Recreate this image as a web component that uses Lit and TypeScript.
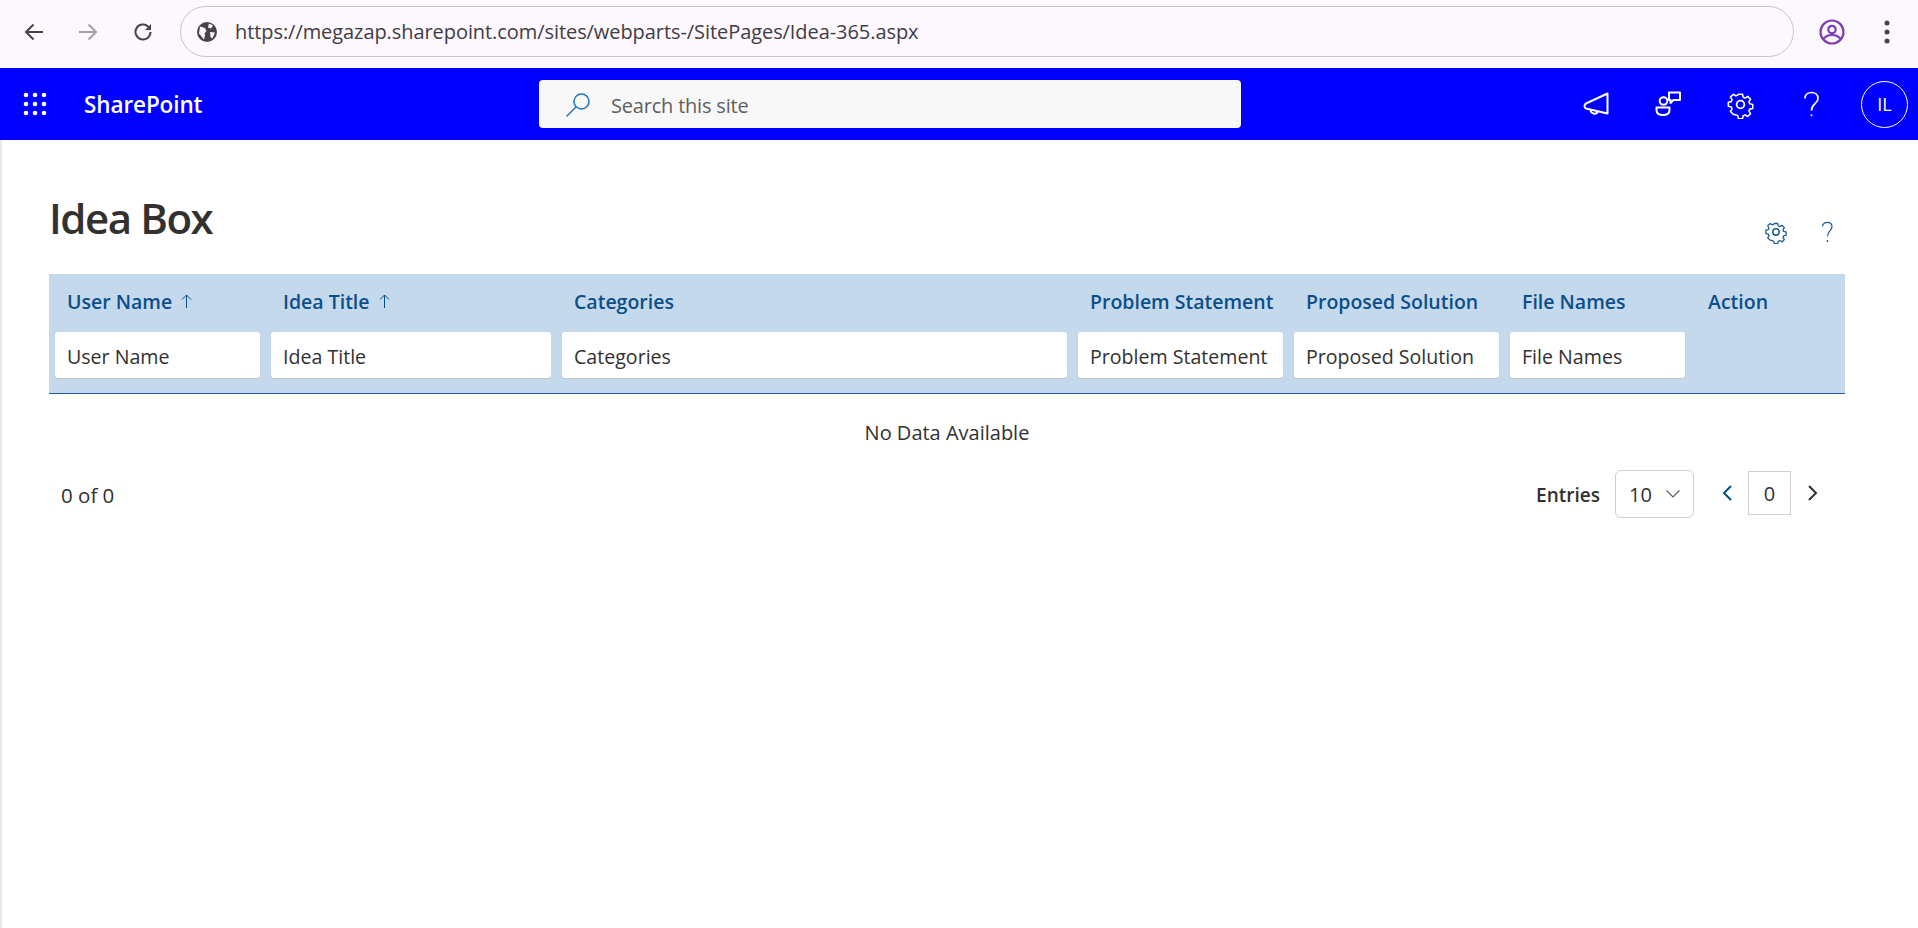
import { LitElement, html, svg, css } from 'lit';
import { customElement } from 'lit/decorators.js';

const columns = [
  { label: 'User Name', sort: true, filter: true },
  { label: 'Idea Title', sort: true, filter: true },
  { label: 'Categories', sort: false, filter: true },
  { label: 'Problem Statement', sort: false, filter: true },
  { label: 'Proposed Solution', sort: false, filter: true },
  { label: 'File Names', sort: false, filter: true },
  { label: 'Action', sort: false, filter: false },
];

const gear = html`<svg class="gear" viewBox="0 0 24 24" fill="none" stroke="currentColor" stroke-width="1.5" stroke-linejoin="round">
  <circle cx="12" cy="12" r="3.2"></circle>
  <path d="M10 2h4l.6 2.9 1.9.8 2.5-1.6 2.8 2.8-1.6 2.5.8 1.9 2.9.6v4l-2.9.6-.8 1.9 1.6 2.5-2.8 2.8-2.5-1.6-1.9.8-.6 2.9h-4l-.6-2.9-1.9-.8L5 21.6l-2.8-2.8 1.6-2.5-.8-1.9-2.9-.6v-4l2.9-.6.8-1.9L2.2 4.8 5 2l2.5 1.6 1.9-.8z" transform="translate(1.8 1.8) scale(.85)"></path>
</svg>`;

@customElement('app-root')
export class AppRoot extends LitElement {
  static styles = css`
    :host {
      display: block;
      height: 928px;
      overflow: hidden;
      background: #fff;
      font-family: 'Open Sans', 'Liberation Sans', sans-serif;
      color: #323130;
    }
    svg { display: block; }

    .browser {
      height: 67px;
      box-sizing: border-box;
      margin-bottom: 1px;
      background: #fdf7fe;
      display: flex;
      align-items: center;
      padding: 0 19px 4px 23px;
      color: #46434b;
    }
    .nav { width: 22px; height: 22px; margin-right: 32px; }
    .nav.off { color: #a3a0a6; margin-right: 33px; }
    .nav.reload { margin-right: 26px; }
    .address {
      width: 1614px;
      height: 51px;
      box-sizing: border-box;
      border: 1.5px solid #c9c2cb;
      border-radius: 26px;
      display: flex;
      align-items: center;
      padding-left: 15px;
      font-size: 20px;
      letter-spacing: -.07px;
      color: #3f3c44;
    }
    .address svg { width: 22px; height: 22px; margin-right: 17px; }
    .profile { width: 26px; height: 26px; margin-left: 25px; color: #7b3fb5; }
    .kebab { width: 6px; height: 24px; margin-left: 39px; color: #46434b; }

    .suite {
      height: 72px;
      background: #0000ff;
      color: #fff;
      display: flex;
      align-items: center;
    }
    .waffle { width: 24px; height: 24px; margin-left: 23px; }
    .brand {
      width: 455px;
      margin-left: 37px;
      font-size: 22.5px;
      font-weight: 600;
      letter-spacing: -.1px;
    }
    .search {
      width: 702px;
      height: 48px;
      box-sizing: border-box;
      background: #f8f8f8;
      border-radius: 4px;
      display: flex;
      align-items: center;
      padding: 2px 0 0 26px;
      color: #605e5c;
      font-size: 20px;
      letter-spacing: -.2px;
    }
    .search svg { width: 26px; height: 26px; margin-right: 20px; color: #1f75bd; }
    .actions { margin-left: auto; margin-right: 10px; display: flex; align-items: center; }
    .actions svg { width: 26px; height: 26px; }
    .actions svg.gear { width: 29px; height: 29px; }
    .actions .cell { width: 72px; display: flex; justify-content: center; }
    .avatar {
      width: 47px;
      height: 47px;
      box-sizing: border-box;
      border: 1px solid #fff;
      border-radius: 50%;
      display: flex;
      align-items: center;
      justify-content: center;
      font-size: 18px;
      margin-left: 13px;
    }

    .page {
      height: 788px;
      box-sizing: border-box;
      border-left: 2px solid #e8e8e8;
      padding: 0 73px 0 47px;
    }
    .title-row {
      height: 134px;
      display: flex;
      align-items: flex-start;
      justify-content: space-between;
    }
    h1 {
      margin: 0;
      padding-top: 51px;
      font-size: 42px;
      line-height: 54px;
      font-weight: 600;
      letter-spacing: -1.45px;
      color: #323130;
    }
    .tools { display: flex; align-items: center; margin-top: 80px; color: #1a5a96; }
    .tools svg { width: 24px; height: 24px; }
    .tools .help { margin-left: 27px; margin-right: 6px; }

    .grid {
      display: grid;
      grid-template-columns: 216px 291px 516px 216px 216px 186px 155px;
      background: #c5d9ec;
      border-bottom: 1px solid #1f5c99;
      height: 120px;
      box-sizing: border-box;
    }
    .col { padding: 0 5px 0 6px; display: flex; flex-direction: column; }
    .col-head {
      height: 58px;
      box-sizing: border-box;
      padding: 0 0 4px 12px;
      display: flex;
      align-items: center;
      gap: 9px;
      font-size: 19.5px;
      font-weight: 600;
      color: #0b4f8a;
      white-space: nowrap;
    }
    .col-head svg { width: 11px; height: 14px; }
    .filter {
      height: 46px;
      box-sizing: border-box;
      background: #fff;
      border-radius: 3px;
      box-shadow: 0 1px 1px #c4c4c4;
      padding: 2px 0 0 12px;
      display: flex;
      align-items: center;
      font-size: 19.6px;
      color: #323130;
      white-space: nowrap;
      overflow: hidden;
    }
    .empty {
      height: 76px;
      display: flex;
      align-items: center;
      justify-content: center;
      font-size: 20px;
    }
    .pager {
      display: flex;
      align-items: center;
      height: 48px;
      padding: 0 26px 0 12px;
      font-size: 20px;
    }
    .pager .count { margin: 2px auto 0 0; font-size: 20.5px; }
    .entries { font-weight: 600; font-size: 19px; margin: 2px 15px 0 0; }
    .select {
      width: 79px;
      height: 48px;
      box-sizing: border-box;
      border: 1px solid #cfcfcf;
      border-radius: 6px;
      display: flex;
      align-items: center;
      padding-left: 13px;
      gap: 13px;
    }
    .select svg { width: 16px; height: 10px; color: #605e5c; }
    .chev { width: 12px; height: 20px; margin-bottom: 2px; }
    .prev { margin-left: 27px; color: #004e8c; }
    .next { color: #323130; }
    .page-no {
      width: 43px;
      height: 44px;
      box-sizing: border-box;
      border: 1px solid #cfcfcf;
      margin: 0 16px 2px 15px;
      display: flex;
      align-items: center;
      justify-content: center;
    }
  `;

  renderBrowser() {
    return html`<div class="browser">
      <svg class="nav" viewBox="0 0 22 22" fill="none" stroke="currentColor" stroke-width="2"><path d="M20 11H3M10.5 3.5 3 11l7.5 7.5"></path></svg>
      <svg class="nav off" viewBox="0 0 22 22" fill="none" stroke="currentColor" stroke-width="2"><path d="M2 11h17M11.5 3.5 19 11l-7.5 7.5"></path></svg>
      <svg class="nav reload" viewBox="0 0 22 22" fill="none" stroke="currentColor" stroke-width="2"><path d="M18.5 11a7.5 7.5 0 1 1-2.3-5.4L18.5 8"></path><path d="M19 3v6h-6z" fill="currentColor" stroke="none"></path></svg>
      <div class="address">
        <svg viewBox="0 0 22 22"><circle cx="11" cy="11" r="10" fill="#46434b"></circle><path d="M4 5.5 9 7l1.5 3-2 2.5.5 2-1 4-5-6zM13 2.5l4 2-2 3-3-1zM14 11l5 .5-2.5 6-2-1.5z" fill="#fdf7fe"></path></svg>
        https://megazap.sharepoint.com/sites/webparts-/SitePages/Idea-365.aspx
      </div>
      <svg class="profile" viewBox="0 0 26 26" fill="none" stroke="currentColor" stroke-width="2.2"><circle cx="13" cy="13" r="11.5"></circle><circle cx="13" cy="10.5" r="3.7"></circle><path d="M4.5 20c2-3 5-4 8.5-4s6.5 1 8.5 4"></path></svg>
      <svg class="kebab" viewBox="0 0 6 24" fill="currentColor"><circle cx="3" cy="3" r="2.5"></circle><circle cx="3" cy="12" r="2.5"></circle><circle cx="3" cy="21" r="2.5"></circle></svg>
    </div>`;
  }

  renderSuite() {
    const dots = [3, 12, 21].flatMap(y => [3, 12, 21].map(x => svg`<circle cx=${x} cy=${y} r="2.3"></circle>`));
    return html`<div class="suite">
      <svg class="waffle" viewBox="0 0 24 24" fill="#fff">${dots}</svg>
      <div class="brand">SharePoint</div>
      <div class="search">
        <svg viewBox="0 0 26 26" fill="none" stroke="currentColor" stroke-width="1.5"><circle cx="16.5" cy="9.5" r="7.5"></circle><path d="M11 15 1.5 24.5"></path></svg>
        Search this site
      </div>
      <div class="actions">
        <div class="cell"><svg viewBox="0 0 26 26" fill="none" stroke="#fff" stroke-width="2" stroke-linejoin="round"><path d="M24.5 2.5v20L3 17.5c-2-.6-2-4 0-5zM7.5 18.5c0 4.5 6 5.500 7.500 2"></path></svg></div>
        <div class="cell"><svg viewBox="0 0 26 26" fill="none" stroke="#fff" stroke-width="2" stroke-linejoin="round"><circle cx="8.5" cy="10" r="3.8"></circle><path d="M1.5 16.5h13v2.5c0 3-2.5 5-6.5 5s-6.5-2-6.5-5zM14 1.5h11v7.5h-6.5L15.5 12v-3H14z"></path></svg></div>
        <div class="cell">${gear}</div>
        <div class="cell"><svg viewBox="0 0 26 26" fill="none" stroke="#fff" stroke-width="1.7"><path d="M6 7.5c0-8 13-8 13 0 0 5.5-6.500 5-6.500 12"></path><circle cx="12.5" cy="24.2" r="1" fill="#fff" stroke="none"></circle></svg></div>
        <div class="avatar">IL</div>
      </div>
    </div>`;
  }

  renderHead(c: { label: string; sort: boolean; filter: boolean }) {
    return html`<div class="col">
      <div class="col-head">
        ${c.label}
        ${c.sort
          ? html`<svg viewBox="0 0 11 14" fill="none" stroke="currentColor" stroke-width="1"><path d="M5.5 14V1M1 5.5 5.5 1 10 5.5"></path></svg>`
          : ''}
      </div>
      ${c.filter ? html`<div class="filter">${c.label}</div>` : ''}
    </div>`;
  }

  render() {
    return html`
      ${this.renderBrowser()}
      ${this.renderSuite()}
      <div class="page">
        <div class="title-row">
          <h1>Idea Box</h1>
          <div class="tools">
            ${gear}
            <svg class="help" viewBox="0 0 24 24" fill="none" stroke="currentColor" stroke-width="1.2"><path d="M7.5 6.5c0-5.5 9.5-5.5 9.5 0 0 4.500-4.500 4.500-4.500 10"></path><circle cx="12.5" cy="21" r=".9" fill="currentColor" stroke="none"></circle></svg>
          </div>
        </div>
        <div class="grid">${columns.map(c => this.renderHead(c))}</div>
        <div class="empty">No Data Available</div>
        <div class="pager">
          <span class="count">0 of 0</span>
          <span class="entries">Entries</span>
          <div class="select">10
            <svg viewBox="0 0 16 10" fill="none" stroke="currentColor" stroke-width="1.2"><path d="M1.5 1.5 8 8l6.5-6.5"></path></svg>
          </div>
          <svg class="chev prev" viewBox="0 0 12 20" fill="none" stroke="currentColor" stroke-width="2"><path d="M10 3 3 10l7 7"></path></svg>
          <div class="page-no">0</div>
          <svg class="chev next" viewBox="0 0 12 20" fill="none" stroke="currentColor" stroke-width="2"><path d="m2 3 7 7-7 7"></path></svg>
        </div>
      </div>
    `;
  }
}
